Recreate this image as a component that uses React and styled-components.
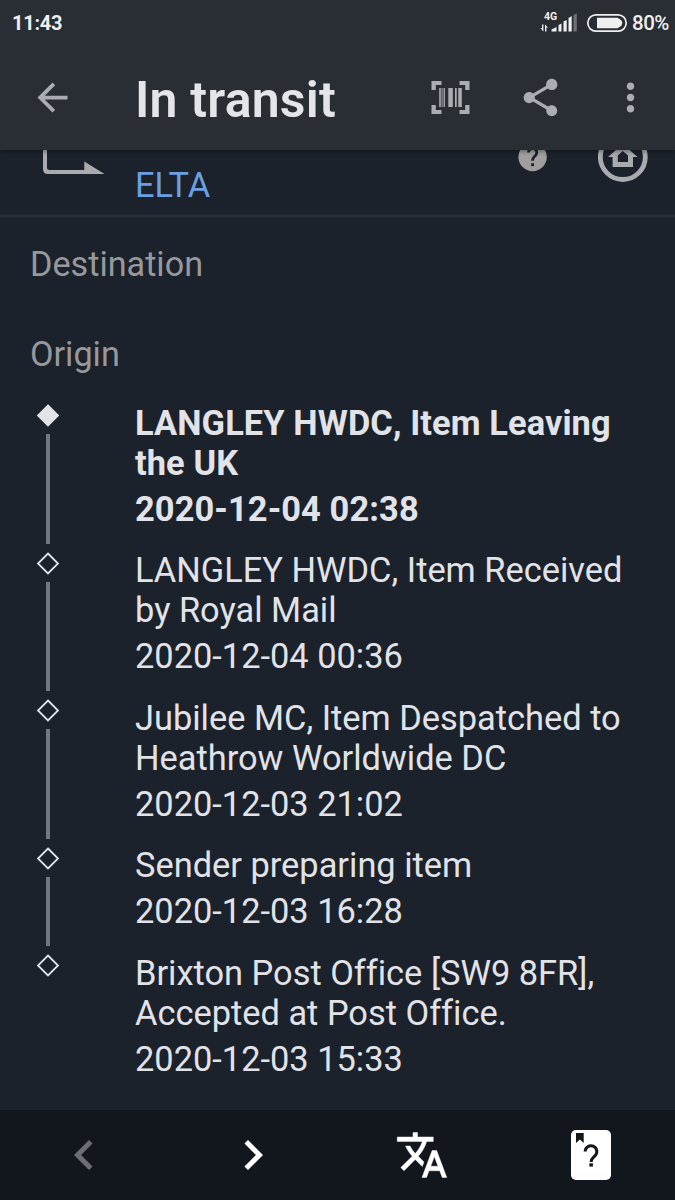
import React from "react";
import styled, { createGlobalStyle } from "styled-components";

const GlobalStyle = createGlobalStyle`
  * {
    box-sizing: border-box;
  }
  body {
    margin: 0;
    background-color: #1c222b;
    font-family: Roboto, "Liberation Sans", sans-serif;
    font-variant-ligatures: none;
  }
  svg {
    display: block;
    flex-shrink: 0;
  }
`;

const Screen = styled("div")`
  width: 675px;
  height: 1200px;
  display: flex;
  flex-direction: column;
  overflow: hidden;
  background-color: #1c222b;
  color: #e1e3e8;
`;

const Header = styled("header")`
  height: 150px;
  flex-shrink: 0;
  background-color: #292d34;
  box-shadow: 0 1px 5px rgba(0, 0, 0, 0.45);
  z-index: 1;
`;

const StatusBar = styled("div")`
  height: 45px;
  display: flex;
  align-items: center;
  justify-content: space-between;
  padding: 0 6px 0 12px;
  color: #eeeff0;
`;

const Clock = styled("span")`
  font-size: 20px;
  font-weight: 700;
  letter-spacing: -0.25px;
  line-height: 24px;
`;

const StatusIcons = styled("div")`
  display: flex;
  align-items: center;
`;

const Network = styled("div")`
  width: 46px;
  height: 20px;
  display: grid;

  > * {
    grid-area: 1 / 1;
  }
`;

const NetworkType = styled("span")`
  padding-left: 4px;
  font-size: 10.5px;
  font-weight: 700;
  line-height: 8px;
`;

const Percent = styled("span")`
  width: 37px;
  margin-left: 4px;
  font-size: 20.5px;
  font-weight: 500;
  letter-spacing: -0.5px;
  line-height: 24px;
  white-space: nowrap;
`;

const Toolbar = styled("div")`
  height: 105px;
  display: flex;
  align-items: center;
  padding-left: 30px;
  color: #aaadb1;
`;

const Title = styled("h1")`
  flex: 1;
  margin: 4px 0 0 60px;
  color: #e3e5e8;
  font-size: 50px;
  font-weight: 600;
  letter-spacing: 0.2px;
  line-height: 60px;
  white-space: nowrap;
`;

const Actions = styled("div")`
  display: flex;
  gap: 45px;
  padding-right: 22.5px;
`;

const Carrier = styled("section")`
  height: 67px;
  flex-shrink: 0;
  display: flex;
  align-items: flex-start;
  border-bottom: 2px solid #2a3039;
  color: #a9abae;
`;

const ArrowCell = styled("div")`
  width: 135px;
  padding-left: 42px;
`;

const CarrierName = styled("a")`
  flex: 1;
  padding-top: 15px;
  color: #6aa0e2;
  font-size: 34.4px;
  line-height: 40px;
`;

const CarrierIcons = styled("div")`
  display: flex;
  gap: 50px;
  padding-right: 27px;
`;

const Section = styled("h2")`
  height: 90px;
  flex-shrink: 0;
  margin: 0;
  padding: 27px 30px 0;
  color: #97999d;
  font-size: 34.2px;
  font-weight: 400;
  line-height: 40px;
`;

const Timeline = styled("ul")`
  flex: 1;
  margin: 0;
  padding: 6px 0 0;
  list-style: none;
`;

const Event = styled("li")`
  display: flex;
  font-weight: ${({ $current }) => ($current ? 700 : 400)};
  letter-spacing: ${({ $current }) => ($current ? "0.1px" : "0")};
`;

const Track = styled("div")`
  width: 135px;
  display: flex;
  flex-direction: column;
  padding-left: 36px;
`;

const Line = styled("div")`
  width: 4px;
  flex: 1;
  margin: 7px 0 7px 10px;
  background-color: #747780;
`;

const EventText = styled("div")`
  width: 510px;
  margin-top: -0.4px;
  padding-bottom: 21.9px;
  font-size: 34.4px;
  line-height: 40px;
`;

const Description = styled("p")`
  margin: 0;
  white-space: pre-line;
`;

const Time = styled("p")`
  margin: 6px 0 0;
`;

const BottomBar = styled("nav")`
  height: 90px;
  flex-shrink: 0;
  display: grid;
  grid-template-columns: repeat(4, 1fr);
  align-items: center;
  justify-items: center;
  background-color: #12161d;
`;

const NavButton = styled("button")`
  padding: 0;
  border: none;
  background: none;
  color: ${({ disabled }) => (disabled ? "#6b6e75" : "#fff")};
`;

const Icon = ({ size = 45, children }) => (
  <svg width={size} height={size} viewBox="0 0 24 24" fill="currentColor">
    {children}
  </svg>
);

const Signal = () => (
  <svg width="38" height="20" viewBox="0 0 38 20" fill="currentColor">
    <path d="M2 11.500H3.400V18.500L.4 15.300H2zM5 18.500V11.500L8 14.500H6.400V18.500z" />
    <path d="M11.500 18.500V16.500L16.500 14V18.500zM18.500 18.500V12L21.500 10.500V18.500zM23.500 18.500V8.500L26.700 7V18.500zM28.500 18.500V5L31.700 3V18.500z" />
    <path d="M33.500 18.500V2L36.800 .5V18.500z" opacity=".35" />
  </svg>
);

const Battery = () => (
  <svg width="42" height="20" viewBox="0 0 42 20">
    <rect x="1.800" y="1.800" width="38.400" height="16.400" rx="8.200" fill="none" stroke="currentColor" strokeWidth="1.700" />
    <path d="M11 4.700H31.500L35 7Q37.500 10 35 13L31.500 15.300H11z" fill="currentColor" />
  </svg>
);

const events = [
  { text: "LANGLEY HWDC, Item Leaving\nthe UK", time: "2020-12-04 02:38" },
  { text: "LANGLEY HWDC, Item Received\nby Royal Mail", time: "2020-12-04 00:36" },
  { text: "Jubilee MC, Item Despatched to\nHeathrow Worldwide DC", time: "2020-12-03 21:02" },
  { text: "Sender preparing item", time: "2020-12-03 16:28" },
  { text: "Brixton Post Office [SW9 8FR],\nAccepted at Post Office.", time: "2020-12-03 15:33" }
];

const App = () => (
  <>
    <GlobalStyle />
    <Screen>
      <Header>
        <StatusBar>
          <Clock>11:43</Clock>
          <StatusIcons>
            <Network>
              <NetworkType>4G</NetworkType>
              <Signal />
            </Network>
            <Battery />
            <Percent>80%</Percent>
          </StatusIcons>
        </StatusBar>
        <Toolbar>
          <Icon>
            <path d="M20 11H7.830l5.590-5.590L12 4l-8 8 8 8 1.410-1.410L7.830 13H20v-2z" />
          </Icon>
          <Title>In transit</Title>
          <Actions>
            <svg width="45" height="45" viewBox="0 0 45 45" fill="currentColor">
              <path d="M3.500 6H13.500V10H7.800V15H3.500zM31.500 6H41.500V15H37.200V10H31.500zM3.500 30H7.800V35H13.500V39H3.500zM37.200 30H41.500V39H31.500V35H37.200z" />
              <path d="M11.200 13h1.600v19h-1.600zM13.600 13h1v19h-1zM15.600 13h1.300v19h-1.300zM20.300 13h4.500v19h-4.500zM27 13h1.700v19H27zM30.300 13h3.500v19h-3.500z" />
            </svg>
            <Icon>
              <path d="M18 16.080c-.76 0-1.440.3-1.960.77L8.910 12.700c.05-.23.09-.46.09-.7s-.04-.47-.09-.7l7.050-4.110c.54.5 1.250.81 2.040.81 1.660 0 3-1.340 3-3s-1.340-3-3-3-3 1.340-3 3c0 .24.04.47.09.7L8.040 9.810C7.500 9.310 6.790 9 6 9c-1.660 0-3 1.340-3 3s1.340 3 3 3c.79 0 1.500-.31 2.040-.81l7.120 4.160c-.05.21-.08.43-.08.65 0 1.610 1.310 2.920 2.920 2.920s2.920-1.310 2.920-2.920-1.310-2.920-2.920-2.920z" />
            </Icon>
            <Icon>
              <path d="M12 8c1.100 0 2-.9 2-2s-.9-2-2-2-2 .9-2 2 .9 2 2 2zm0 2c-1.100 0-2 .9-2 2s.9 2 2 2 2-.9 2-2-.9-2-2-2zm0 6c-1.100 0-2 .9-2 2s.9 2 2 2 2-.9 2-2-.9-2-2-2z" />
            </Icon>
          </Actions>
        </Toolbar>
      </Header>
      <Carrier>
        <ArrowCell>
          <svg width="64" height="26" viewBox="0 0 64 26" fill="currentColor">
            <path d="M1 0H5V17.500Q5 20 7.500 20H42.300V11.500L62.500 24H6Q1 24 1 19z" />
          </svg>
        </ArrowCell>
        <CarrierName>ELTA</CarrierName>
        <CarrierIcons>
          <svg width="30" height="34" viewBox="0 0 30 34">
            <circle cx="14.600" cy="7" r="14.200" fill="#a19f9d" />
            <path d="M10.500 2.500A4.100 4.100 0 1 1 17.500 5.400C15.800 7 14.500 7.800 14.500 10.800" fill="none" stroke="#1c222b" strokeWidth="2.800" />
            <rect x="13.100" y="13.300" width="2.900" height="2.800" fill="#1c222b" />
          </svg>
          <svg width="50" height="34" viewBox="0 0 50 34">
            <circle cx="24.800" cy="7" r="22.500" fill="none" stroke="currentColor" strokeWidth="4.800" />
            <path d="M24.800-6L39.500 7H35V17H14.600V7H10zM24.800 1L19.800 5.500V12H30V5.500z" fill="currentColor" fillRule="evenodd" />
          </svg>
        </CarrierIcons>
      </Carrier>
      <Section>Destination</Section>
      <Section>Origin</Section>
      <Timeline>
        {events.map(({ text, time }, index) => (
          <Event key={time} $current={index === 0}>
            <Track>
              <svg width="24" height="24" viewBox="0 0 24 24">
                <path
                  d="M12 2.500L22 12.500L12 22.500L2 12.500z"
                  fill={index === 0 ? "#e1e3e8" : "none"}
                  stroke="#e1e3e8"
                  strokeWidth="1.800"
                />
              </svg>
              {index < events.length - 1 && <Line />}
            </Track>
            <EventText>
              <Description>{text}</Description>
              <Time>{time}</Time>
            </EventText>
          </Event>
        ))}
      </Timeline>
      <BottomBar>
        <NavButton disabled>
          <Icon size={60}>
            <path d="M15.410 7.410L14 6l-6 6 6 6 1.410-1.410L10.830 12z" />
          </Icon>
        </NavButton>
        <NavButton>
          <Icon size={60}>
            <path d="M10 6L8.590 7.410 13.170 12l-4.580 4.590L10 18l6-6z" />
          </Icon>
        </NavButton>
        <NavButton>
          <Icon size={54}>
            <path
              d="M12.870 15.070l-2.540-2.510.03-.03c1.740-1.940 2.980-4.170 3.710-6.530H17V4h-7V2H8v2H1v1.990h11.170C11.500 7.920 10.440 9.750 9 11.350 8.070 10.320 7.300 9.190 6.690 8h-2c.73 1.630 1.730 3.170 2.980 4.560l-5.090 5.020L4 19l5-5 3.110 3.110.76-2.040zM18.500 10h-2L12 22h2l1.120-3h4.750L21 22h2l-4.500-12zm-2.620 7l1.620-4.330L19.120 17h-3.240z"
              stroke="currentColor"
              strokeWidth="0.200"
            />
          </Icon>
        </NavButton>
        <NavButton>
          <svg width="40" height="50" viewBox="0 0 40 50">
            <rect width="40" height="50" rx="5" fill="#fff" />
            <path d="M5 3H12.700V13L8.900 9.500L5 13z" fill="#12161d" />
            <path d="M14.200 21.500A5.800 5.800 0 1 1 24.100 25.600C22 27.700 20.100 28.800 20.100 32" fill="none" stroke="#12161d" strokeWidth="3" />
            <rect x="18.400" y="33.300" width="3.500" height="3.300" fill="#12161d" />
          </svg>
        </NavButton>
      </BottomBar>
    </Screen>
  </>
);

export default App;
